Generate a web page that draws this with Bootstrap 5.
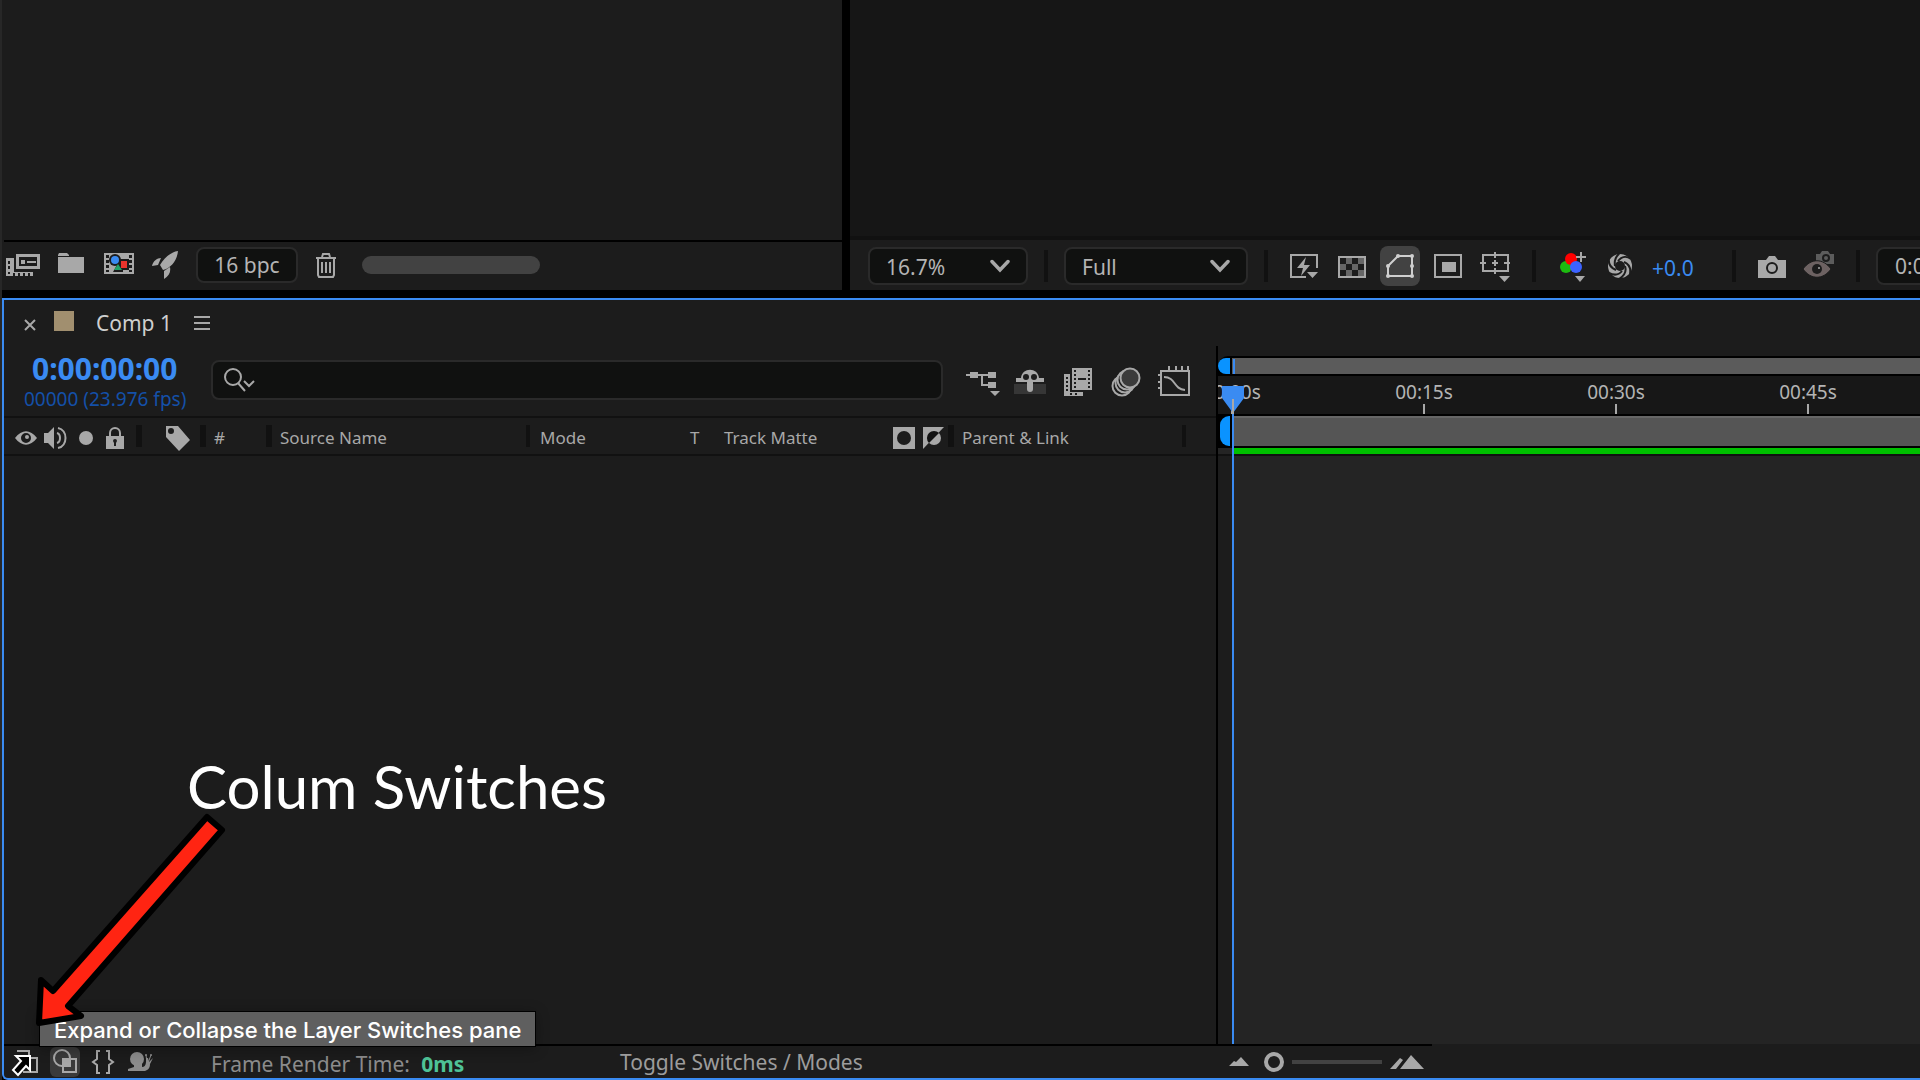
<!DOCTYPE html>
<html lang="en">
<head>
<meta charset="utf-8">
<meta name="viewport" content="width=device-width, initial-scale=1">
<title>Comp 1</title>
<link rel="stylesheet" href="https://cdn.jsdelivr.net/npm/bootstrap@5.3.0/dist/css/bootstrap.min.css">
<style>
:root { --ink:#a8a8a8; --panel:#1c1c1c; --line:#111; --accent:#3a8bf2; --field:#101110; }
body { background:#000; color:var(--ink); font-family:"Noto Sans","Open Sans",sans-serif; font-size:17px; line-height:24px; }
svg { display:block; fill:var(--ink); flex:none; }
.stroke { fill:none; stroke:var(--ink); stroke-width:2; }
button { background:none; border:0; padding:0; color:inherit; flex:none; }
.app { min-height:100vh; border-left:2px solid #272727; }
.upper { min-height:290px; }
.project-pane { flex:0 0 840px; background:var(--panel); }
.project-tools { height:50px; border-top:2px solid #000; margin-left:2px; gap:18px; padding-left:2px; padding-bottom:2px; }
.viewer-pane { background:#161616; margin-left:8px; min-width:0; overflow:hidden; }
.viewer-tools { height:54px; border-top:4px solid var(--line); background:var(--panel); gap:16px; padding-left:18px; padding-top:2px; }
.box-field { background-color:var(--field); border:2px solid #2a2a2a; border-radius:8px; color:#b4b4b4; font-size:21px; }
.bpc { width:102px; height:36px; line-height:32px; }
.hscroll { width:178px; height:18px; border-radius:9px; background:#424242; margin-left:6px; }
.form-select.box-field { height:38px; padding:2px 44px 0 16px; flex:none; line-height:32px;
  background-image:url("data:image/svg+xml,%3Csvg xmlns='http://www.w3.org/2000/svg' viewBox='0 0 20 14'%3E%3Cpath d='M2 2.5l8 8.500 8-8.500' fill='none' stroke='%23a8a8a8' stroke-width='3.500' stroke-linecap='round'/%3E%3C/svg%3E");
  background-size:20px 14px; background-position:right 16px center; }
.zoom-select { width:160px; }
.res-select { width:184px; }
.rule { width:4px; height:32px; background:var(--line); flex:none; }
.tool { width:40px; height:40px; border-radius:8px; }
.tool.active { background:#424242; --ink:#cfcfcf; }
.exposure { width:68px; color:var(--accent); font-size:21px; text-align:left; padding-left:4px; padding-top:4px; }
.time-field { width:160px; height:38px; padding:0 17px; flex:none; }
.timeline { margin-top:8px; border:2px solid var(--accent); border-right:0; border-bottom-left-radius:6px; background:var(--panel); }
.tab-row { height:46px; padding-left:20px; }
.swatch { width:20px; height:20px; background:#a18f6f; margin-left:18px; margin-bottom:4px; }
.tab-name { font-size:21px; color:#cfcfcf; margin-left:22px; margin-right:22px; }
.layers { flex:0 0 1214px; border-right:2px solid #000; }
.search-row { height:70px; padding-left:16px; }
.timecode { width:191px; padding-top:6px; }
.timecode .big { font-size:30px; line-height:34px; font-weight:700; color:var(--accent); padding-left:12px; }
.timecode .small-fps { font-size:19px; line-height:26px; color:#1450a8; padding-left:4px; }
.search-line { padding-top:14px; }
.search-box { width:732px; height:40px; }
.search-box input { background:none; border:0; outline:0; color:inherit; }
.tools-right { gap:8px; margin-left:19px; }
.col-heads { height:40px; border-top:2px solid var(--line); border-bottom:2px solid var(--line); }
.head { height:22px; border-right:6px solid var(--line); padding-left:8px; padding-top:3px; display:flex; align-items:center; flex:none; }
.head.thin { border-right-width:4px; }
.h-av { width:138px; padding-left:11px; gap:7px; }
.h-label { width:64px; padding-left:24px; }
.h-num { width:66px; }
.h-name { width:258px; }
.h-mode { width:424px; padding-left:10px; padding-right:4px; gap:8px; }
.h-mode .m1 { width:142px; flex:none; }
.h-mode .m2 { width:26px; }
.h-parent { width:232px; }
.time-pane { min-width:0; background:#242424; }
.time-head { background:var(--panel); padding-top:10px; }
.nav-bar-track, .work-track { background:#000; padding-left:14px; }
.nav-bar-track { border-top-left-radius:10px; padding-top:2px; padding-bottom:2px; height:20px; }
.range-fill { height:16px; background:#5b5b5b; }
.handle { left:0; width:12px; background:#0a93ff; border-radius:9px 0 0 9px; }
.nav-bar-track .handle { top:2px; height:16px; }
.work-track .handle { left:2px; width:10px; top:2px; height:30px; }
.ruler { background:#171717; height:38px; overflow:hidden; }
.mark-cell { width:192px; flex:none; text-align:center; color:#b4b4b4; font-size:19px; line-height:28px; padding-top:2px; }
.mark-cell:first-child { margin-left:-82px; }
.mark-cell::after { content:""; display:block; width:2px; height:10px; margin:-2px auto 0; background:var(--ink); }
.work-track { padding-top:2px; height:34px; }
.work-fill { height:30px; background:#555; border-top:2px solid #666; }
.cache { height:6px; background:#00c000; margin-left:16px; }
.under { height:2px; background:var(--line); }
.lead-in { width:14px; background:var(--panel); }
.footer-bar { border-top:2px solid #000; height:34px; width:1428px; font-size:21px; }
.foot-tools { width:207px; padding-left:8px; gap:8px; }
.foot-btn { width:30px; height:30px; border-radius:6px; }
.foot-btn.active { background:#3a3a3a; }
.render { width:409px; color:#8c8c8c; padding-top:3px; }
.render b { font-weight:700; color:#4fc397; margin-left:6px; }
.toggle-link { width:609px; text-align:left; color:#9c9c9c; }
.zoom-range { width:118px; height:20px; margin:0 8px 0 15px; appearance:none; background:linear-gradient(#424242,#424242) right center/90px 4px no-repeat; }
.zoom-range::-webkit-slider-thumb { appearance:none; width:20px; height:20px; border:4px solid var(--ink); border-radius:50%; background:var(--panel); }
.canvas-note { left:187px; top:746px; color:#fff; font-family:Lato,sans-serif; font-size:60px; line-height:80px; }
.tip { left:39px; top:1011px; height:36px; background:#5f5f5f; border:1px solid #000; color:#fff; font-family:Inter,sans-serif; font-size:22px; line-height:36px; font-weight:500; padding:0 14px; box-shadow:0 2px 14px rgba(0,0,0,.3); }
.overlay { left:0; top:0; }
</style>
<script src="https://cdn.jsdelivr.net/npm/bootstrap@5.3.0/dist/js/bootstrap.bundle.min.js"></script>
</head>
<body class="overflow-hidden">
<div class="app d-flex flex-column position-relative">
  <div class="upper d-flex">
    <section class="project-pane d-flex flex-column justify-content-end">
      <div class="project-tools d-flex align-items-center">
        <button aria-label="Interpret footage"><svg width="34" height="26" viewBox="0 0 34 26"><path fill-rule="evenodd" d="M10 2h24v15H10zM13 5v9h18V5z"/><path d="M15 8h4v4h-4zM21 9h9v2h-9zM0 6h8v14h19v4H0z"/><path fill="#1c1c1c" d="M2 9h2v3H2zM2 14h2v3H2zM2 20h2v2H2zM7 21h2v3H7zM12 21h2v3h-2zM17 21h2v3h-2zM22 21h2v3h-2z"/></svg></button>
        <button aria-label="New folder"><svg width="26" height="26" viewBox="0 0 26 26"><path d="M0 3l1-2h8l2 2v1H0zM0 5h26v16H0z"/></svg></button>
        <button aria-label="New composition"><svg width="32" height="26" viewBox="0 0 32 26"><path d="M2 1h30v21H2z"/><path fill="#1c1c1c" d="M4 3h3v3H4zM4 8h3v3H4zM4 13h3v3H4zM4 18h3v2H4zM27 3h3v3h-3zM27 8h3v3h-3zM27 13h3v3h-3zM27 18h3v2h-3z"/><circle cx="13" cy="8" r="6" fill="#1c1c1c"/><path fill="#1c1c1c" d="M11 20l5-9 2-4h9v11h-6v2z"/><circle cx="13" cy="8" r="4" fill="#3a8bf2"/><path fill="#e8342c" d="M19 9h6v7h-6z"/><path fill="#23a368" d="M12 18l4-6 4 6z"/></svg></button>
        <button aria-label="Quick export"><svg width="26" height="28" viewBox="0 0 26 28"><path d="M26 0c-7 1-13 6-18 14l3 5c8-2 14-9 15-19zM9 7l-3 7-6 1c1-5 5-8 9-8zM18 16c1 5-1 9-6 12v-8z"/></svg></button>
        <button class="box-field bpc">16 bpc</button>
        <button aria-label="Delete"><svg width="22" height="26" viewBox="0 0 22 26"><g class="stroke"><path d="M0 6h20M6 5l1-3h6l1 3M2 6v17l1 2h14l1-2V6M6 10v11M10 10v11M14 10v11"/></g></svg></button>
        <div class="hscroll"></div>
      </div>
    </section>
    <section class="viewer-pane flex-grow-1 d-flex flex-column justify-content-end">
      <div class="viewer-tools d-flex align-items-center">
        <select class="form-select box-field zoom-select" aria-label="Magnification"><option>16.7%</option></select>
        <div class="rule"></div>
        <select class="form-select box-field res-select" aria-label="Resolution"><option>Full</option></select>
        <div class="rule"></div>
        <div class="d-flex gap-2">
          <button class="tool" aria-label="Fast previews"><svg width="40" height="40"><path class="stroke" d="M22 31H7V9h26v13"/><path d="M22 11l-9 11h6l-2 8 9-11h-6zM23 26h11l-5.500 6z"/></svg></button>
          <button class="tool" aria-label="Transparency grid"><svg width="40" height="40"><path class="stroke" d="M7 11h26v20H7z"/><path fill="#666" d="M14 12h6v6h-6zM26 12h6v6h-6zM8 18h6v6H8zM20 18h6v6h-6zM14 24h6v6h-6zM26 24h6v6h-6z"/></svg></button>
          <button class="tool active" aria-label="Mask visibility"><svg width="40" height="40"><path class="stroke" d="M8 20L18 10h14v20H8z"/><g><circle cx="8" cy="20" r="2"/><circle cx="18" cy="10" r="2"/><circle cx="32" cy="10" r="2"/><circle cx="32" cy="20" r="2"/><circle cx="8" cy="30" r="2"/><circle cx="32" cy="30" r="2"/></g></svg></button>
          <button class="tool" aria-label="Region of interest"><svg width="40" height="40"><path class="stroke" d="M7 9h26v22H7z"/><path d="M14 16h14v10H14z"/></svg></button>
          <button class="tool" aria-label="Grid and guides"><svg width="40" height="40"><path class="stroke" d="M7 9h25v16H7zM19 6v6M19 22v6M4 17h6M28 17h6M19 14v6M16 17h6"/><path d="M23 30h11l-5.500 6z"/></svg></button>
        </div>
        <div class="rule"></div>
        <div class="d-flex gap-2">
          <button class="tool" aria-label="Channels"><svg width="40" height="40"><circle cx="14" cy="21" r="6" fill="#1dbb10"/><circle cx="19" cy="13" r="6" fill="#f00"/><circle cx="24" cy="21" r="6" fill="#3c62ff"/><path class="stroke" d="M24 11h10M29 6v10"/><path d="M23 30h10l-5 6z"/></svg></button>
          <button class="tool" aria-label="Reset exposure"><svg width="40" height="40"><circle cx="20" cy="20" r="12"/><circle cx="20" cy="20" r="5" fill="#1c1c1c"/><g fill="none" stroke="#1c1c1c" stroke-width="2"><path d="M15 20c-1-6 1-10 5-13M18 15c4-5 9-5 13-2M24 16c5 2 7 6 6 12M25 20c2 6-1 10-6 13M22 25c-4 5-9 4-13 2M16 24c-5-2-8-6-7-12"/></g></svg></button>
          <button class="exposure">+0.0</button>
        </div>
        <div class="rule"></div>
        <div class="d-flex gap-2">
          <button class="tool" aria-label="Take snapshot"><svg width="40" height="40"><path d="M6 14h8l3-4h6l3 4h8v18H6z"/><circle cx="20" cy="22" r="5" fill="none" stroke="#1c1c1c" stroke-width="2"/></svg></button>
          <button class="tool" aria-label="Show snapshot"><svg width="40" height="40"><path fill="#5c5c5c" d="M16 8h4l2-3h6l2 3h4v10H16z"/><circle cx="26" cy="12" r="3" fill="none" stroke="#1c1c1c" stroke-width="2"/><path stroke="#1c1c1c" fill="#6d6262" d="M3 23c8-11 20-11 28 0-8 11-20 11-28 0z"/><circle cx="17" cy="23" r="5" fill="#1c1c1c"/><circle cx="19" cy="22" r="1"/></svg></button>
        </div>
        <div class="rule"></div>
        <input class="box-field time-field" value="0:00:00:00" aria-label="Preview time">
      </div>
    </section>
  </div>

  <main class="timeline flex-grow-1 d-flex flex-column">
    <div class="tab-row d-flex align-items-center">
      <button class="pt-1" aria-label="Close"><svg width="12" height="12"><path class="stroke" d="M1 1l10 10M11 1L1 11"/></svg></button>
      <span class="swatch"></span>
      <span class="tab-name">Comp 1</span>
      <button aria-label="Panel menu"><svg width="16" height="14"><path class="stroke" d="M0 1h16M0 7h16M0 13h16"/></svg></button>
    </div>
    <div class="flex-grow-1 d-flex">
      <section class="layers">
        <div class="search-row d-flex">
          <div class="timecode"><div class="big">0:00:00:00</div><div class="small-fps">00000 (23.976 fps)</div></div>
          <div class="search-line align-self-start d-flex">
            <label class="box-field search-box d-flex align-items-center"><svg class="ms-2 me-2" width="34" height="28"><g class="stroke"><circle cx="12" cy="11" r="8"/><path d="M17 17l7 8M23 15l5 5 5-5"/></g></svg><input class="flex-grow-1" type="text" aria-label="Search layers"></label>
            <div class="tools-right d-flex">
              <button class="tool" aria-label="Composition mini-flowchart"><svg width="40" height="40"><path d="M8 12h8v6H8zM26 12h8v6h-8zM26 22h8v6h-8zM28 31h10l-5 5z"/><path class="stroke" d="M4 15h22M20 15v10h6"/></svg></button>
              <button class="tool" aria-label="Hide shy layers"><svg width="40" height="40"><path fill="#363636" d="M4 24h32v10H4z"/><path d="M6 22v-4h5c1-11 17-11 18 0h5v4z"/><path d="M17 21h6v8a3 3 0 0 1-6 0z"/><circle cx="16" cy="17" r="3" fill="#1c1c1c"/><circle cx="24" cy="17" r="3" fill="#1c1c1c"/></svg></button>
              <button class="tool" aria-label="Frame blending"><svg width="40" height="40"><path d="M14 8h20v22H14zM6 14h6v18h13v4H6z"/><path fill="#1c1c1c" d="M16 10h2v2h-2zM16 14h2v2h-2zM16 18h2v2h-2zM16 22h2v2h-2zM16 26h2v2h-2zM30 10h2v2h-2zM30 14h2v2h-2zM30 18h2v2h-2zM30 22h2v2h-2zM30 26h2v2h-2zM20 18h8v2h-8zM8 17h2v2H8zM8 21h2v2H8zM8 25h2v2H8zM8 29h2v2H8zM12 33h2v2h-2zM17 33h2v2h-2z"/></svg></button>
              <button class="tool" aria-label="Motion blur"><svg width="40" height="40"><g class="stroke"><circle cx="16" cy="26" r="9.500"/><circle cx="19" cy="23" r="9.500" fill="#1c1c1c"/><circle cx="21" cy="20" r="9.500" fill="#1c1c1c"/><circle cx="24" cy="18" r="9.500" fill="#3b3b3b"/></g></svg></button>
              <button class="tool" aria-label="Graph editor"><svg width="40" height="40"><path class="stroke" d="M7 11h28v24H7zM15 6v5M22 6v5M28 6v5M34 6v5M4 15h3M4 22h3M4 28h3M10 17c12 0 9 12 21 13"/></svg></button>
            </div>
          </div>
        </div>
        <div class="col-heads d-flex align-items-center">
          <div class="head h-av">
            <svg width="22" height="22"><path fill-rule="evenodd" d="M0 11c7-9 15-9 22 0-7 9-15 9-22 0zm11-5a5 5 0 1 0 0 10 5 5 0 0 0 0-10z"/><circle cx="12" cy="10" r="2"/></svg>
            <svg width="24" height="24"><path d="M0 7h4l6-6v22l-6-6H0z"/><path class="stroke" d="M13 7c4 1 4 9 0 10M14 2c10 2 10 18 0 20"/></svg>
            <svg width="24" height="22"><circle cx="11" cy="11" r="7"/></svg>
            <svg width="18" height="24"><path d="M0 10h18v13H0z"/><path class="stroke" d="M4 10V7a5 5 0 0 1 10 0v3"/><path fill="#1c1c1c" d="M7 15a2 2 0 1 1 4 0l-1 2v3H8v-3z"/></svg>
          </div>
          <div class="head h-label"><svg width="24" height="26"><path fill-rule="evenodd" d="M0 1h12l12 14-11 11L0 12zm5 2a3 3 0 1 0 0 6 3 3 0 0 0 0-6z"/></svg></div>
          <div class="head h-num">#</div>
          <div class="head thin h-name">Source Name</div>
          <div class="head h-mode"><span class="m1">Mode</span><span class="m2">T</span><span class="me-auto">Track Matte</span>
            <svg width="22" height="22"><path d="M0 0h22v22H0z"/><circle cx="11" cy="11" r="7" fill="#1c1c1c"/></svg>
            <svg width="21" height="22"><path d="M0 0h21L0 22z"/><circle cx="11" cy="11" r="7"/><path fill="#111" d="M16 6A7 7 0 0 0 6 16z"/></svg>
          </div>
          <div class="head thin h-parent">Parent &amp; Link</div>
        </div>
      </section>
      <section class="time-pane flex-grow-1 d-flex flex-column">
        <div class="time-head">
          <div class="nav-bar-track position-relative"><div class="range-fill"></div><span class="handle position-absolute"></span></div>
        </div>
        <div class="ruler d-flex">
          <div class="mark-cell">00:00s</div><div class="mark-cell">00:15s</div><div class="mark-cell">00:30s</div><div class="mark-cell">00:45s</div>
        </div>
        <div class="work-track position-relative"><div class="work-fill"></div><span class="handle position-absolute"></span></div>
        <div class="cache"></div>
        <div class="under"></div>
        <div class="flex-grow-1 d-flex"><div class="lead-in"></div></div>
      </section>
    </div>
    <footer class="footer-bar d-flex align-items-center">
      <div class="foot-tools d-flex">
        <button class="foot-btn" aria-label="Layer switches"><svg width="30" height="30"><path class="stroke" d="M5 4h12v7h8v14H11"/></svg></button>
        <button class="foot-btn active" aria-label="Transfer controls"><svg width="30" height="30"><path d="M13 12h8v8h-8z"/><g class="stroke"><circle cx="12" cy="11" r="8"/><path d="M13 12h13v13H13z"/></g></svg></button>
        <button class="foot-btn" aria-label="In and out columns"><svg width="30" height="30"><path class="stroke" d="M12 4H9v8l-4 3 4 3v8h3M18 4h3v8l4 3-4 3v8h-3"/></svg></button>
        <button class="foot-btn" aria-label="Render time"><svg width="30" height="30"><g fill="#8c8c8c"><circle cx="11" cy="12" r="7"/><path d="M2 22l6-2v-3h8v3c5 0 4-7 4-9h2l1 4 4-4-3 6c0 4-2 6-5 7H2z"/><circle cx="20" cy="8" r="1"/><circle cx="25" cy="8" r="1"/></g><path d="M20 8l1 8M25 8l-3 8" stroke="#8c8c8c"/></svg></button>
      </div>
      <div class="render">Frame Render Time: <b>0ms</b></div>
      <button class="toggle-link">Toggle Switches / Modes</button>
      <svg width="20" height="10"><path d="M0 9l5-5 2 1 5-5 8 9z"/></svg>
      <input class="zoom-range" type="range" min="0" max="100" value="0" aria-label="Timeline zoom">
      <svg width="34" height="16"><path d="M0 15L10 4l3 2-7 9zM10 15L21 1l13 14z"/></svg>
    </footer>
  </main>
</div>

<svg class="overlay position-absolute" width="1300" height="1044" viewBox="0 0 1300 1044">
  <path fill="#3a8bf2" d="M1222 386h22v12l-11 15-11-15zM1232 414h2v630h-2zM1233 359h2v15h-2z"/>
  <path d="M1232 399h2v15h-2z"/>
</svg>
<div class="canvas-note position-absolute">Colum Switches</div>
<div class="tip position-absolute" role="tooltip">Expand or Collapse the Layer Switches pane</div>
<svg class="overlay position-absolute" width="300" height="1080" viewBox="0 0 300 1080">
  <path fill="#ff2412" stroke="#000" stroke-width="6" stroke-linejoin="round" d="M207 817l15 13L68 1006l13 10-42 7 2-43 12 11z"/>
  <path fill="#000" stroke="#fff" stroke-width="2" d="M16 1056h14v14l-4-4-8 9-5-5 8-9z"/>
</svg>
</body>
</html>
